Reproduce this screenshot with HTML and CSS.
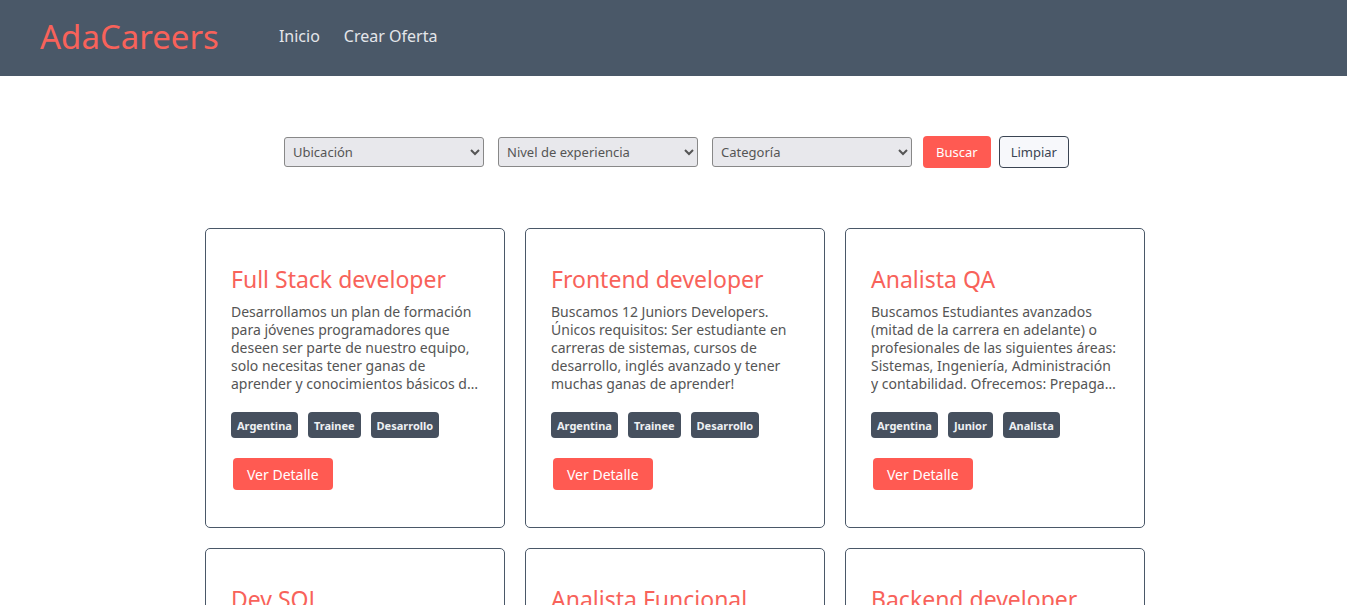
FILE: index.html
```html
<!DOCTYPE html>
<html lang="es">
<head>
<meta charset="utf-8">
<title>AdaCareers</title>
<link rel="stylesheet" href="styles.css">
</head>
<body>
<header class="navbar">
  <a class="brand" href="#">AdaCareers</a>
  <nav class="nav">
    <a href="#">Inicio</a>
    <a href="#">Crear Oferta</a>
  </nav>
</header>
<main>
  <form class="filters">
    <select class="sel"><option>Ubicación</option></select>
    <select class="sel"><option>Nivel de experiencia</option></select>
    <select class="sel"><option>Categoría</option></select>
    <button type="button" class="btn btn-primary search">Buscar</button>
    <button type="button" class="btn btn-outline">Limpiar</button>
  </form>
  <section class="grid">
    <article class="card">
      <h2 class="card-title">Full Stack developer</h2>
      <p class="card-text">Desarrollamos un plan de formación para jóvenes programadores que deseen ser parte de nuestro equipo, solo necesitas tener ganas de aprender y conocimientos básicos de programación.</p>
      <div class="tags"><span class="tag">Argentina</span><span class="tag">Trainee</span><span class="tag">Desarrollo</span></div>
      <button type="button" class="btn btn-primary detail">Ver Detalle</button>
    </article>
    <article class="card">
      <h2 class="card-title">Frontend developer</h2>
      <p class="card-text">Buscamos 12 Juniors Developers. Únicos requisitos: Ser estudiante en carreras de sistemas, cursos de desarrollo, inglés avanzado y tener muchas ganas de aprender!</p>
      <div class="tags"><span class="tag">Argentina</span><span class="tag">Trainee</span><span class="tag">Desarrollo</span></div>
      <button type="button" class="btn btn-primary detail">Ver Detalle</button>
    </article>
    <article class="card">
      <h2 class="card-title">Analista QA</h2>
      <p class="card-text">Buscamos Estudiantes avanzados (mitad de la carrera en adelante) o profesionales de las siguientes áreas: Sistemas, Ingeniería, Administración y contabilidad. Ofrecemos: Prepaga de primer nivel.</p>
      <div class="tags"><span class="tag">Argentina</span><span class="tag">Junior</span><span class="tag">Analista</span></div>
      <button type="button" class="btn btn-primary detail">Ver Detalle</button>
    </article>
    <article class="card">
      <h2 class="card-title">Dev SQL</h2>
      <p class="card-text">Buscamos desarrolladores SQL.</p>
    </article>
    <article class="card">
      <h2 class="card-title">Analista Funcional</h2>
      <p class="card-text">Buscamos analistas funcionales.</p>
    </article>
    <article class="card">
      <h2 class="card-title">Backend developer</h2>
      <p class="card-text">Buscamos desarrolladores backend.</p>
    </article>
  </section>
</main>
</body>
</html>
```
FILE: styles.css
```css
* { box-sizing: border-box; }
body {
  margin: 0;
  font-family: "Noto Sans", "Open Sans", sans-serif;
  color: #4a5868;
  background: #fff;
}
.navbar {
  height: 76px;
  background: #4a5868;
  display: flex;
  align-items: center;
  padding: 0 40px 4px;
}
.brand {
  color: #f8625a;
  font-size: 33px;
  text-decoration: none;
  margin-right: 60px;
  font-weight: 400;
}
.nav { display: flex; gap: 24px; }
.nav a {
  color: #e4e6ea;
  text-decoration: none;
  font-size: 16px;
}
.filters {
  display: flex;
  justify-content: center;
  align-items: center;
  gap: 14px;
  margin-top: 60px;
  padding-left: 6px;
}
.sel {
  width: 200px;
  height: 30px;
  background: #e8e8ec;
  border: 1px solid #888;
  border-radius: 3px;
  color: #555;
  font-family: inherit;
  font-size: 13px;
  padding: 0 4px;
}
.btn {
  font-family: inherit;
  font-size: 13px;
  border-radius: 4px;
  height: 32px;
  padding: 0 13px;
  cursor: pointer;
}
.btn-primary {
  background: #ff5a52;
  color: #fff;
  border: none;
}
.search { margin-left: -3px; }
.btn-outline {
  background: #f7f8fb;
  border: 1px solid #3a4452;
  color: #3a4452;
  margin-left: -6px;
  padding: 0 11px;
}
.grid {
  display: grid;
  grid-template-columns: repeat(3, 300px);
  gap: 20px;
  justify-content: center;
  margin: 60px 0 0;
  padding-left: 3px;
}
.card {
  height: 300px;
  border: 1px solid #4a5868;
  border-radius: 5px;
  padding: 25px 25px;
  display: flex;
  flex-direction: column;
  align-items: flex-start;
}
.card-title {
  color: #f8625a;
  font-size: 23px;
  font-weight: 400;
  margin: 9px 0 8px;
}
.card-text {
  margin: 0 0 19px;
  font-size: 14px;
  line-height: 18px;
  color: #555;
  display: -webkit-box;
  -webkit-line-clamp: 5;
  -webkit-box-orient: vertical;
  overflow: hidden;
}
.tags { display: flex; gap: 10px; }
.tag {
  background: #46505e;
  color: #eef0f3;
  font-size: 11px;
  font-weight: 700;
  height: 26px;
  padding: 0 6px;
  border-radius: 4px;
  display: flex;
  align-items: center;
}
.detail {
  margin: 20px 0 0 2px;
  font-size: 14px;
  padding: 0 14px;
}
```
